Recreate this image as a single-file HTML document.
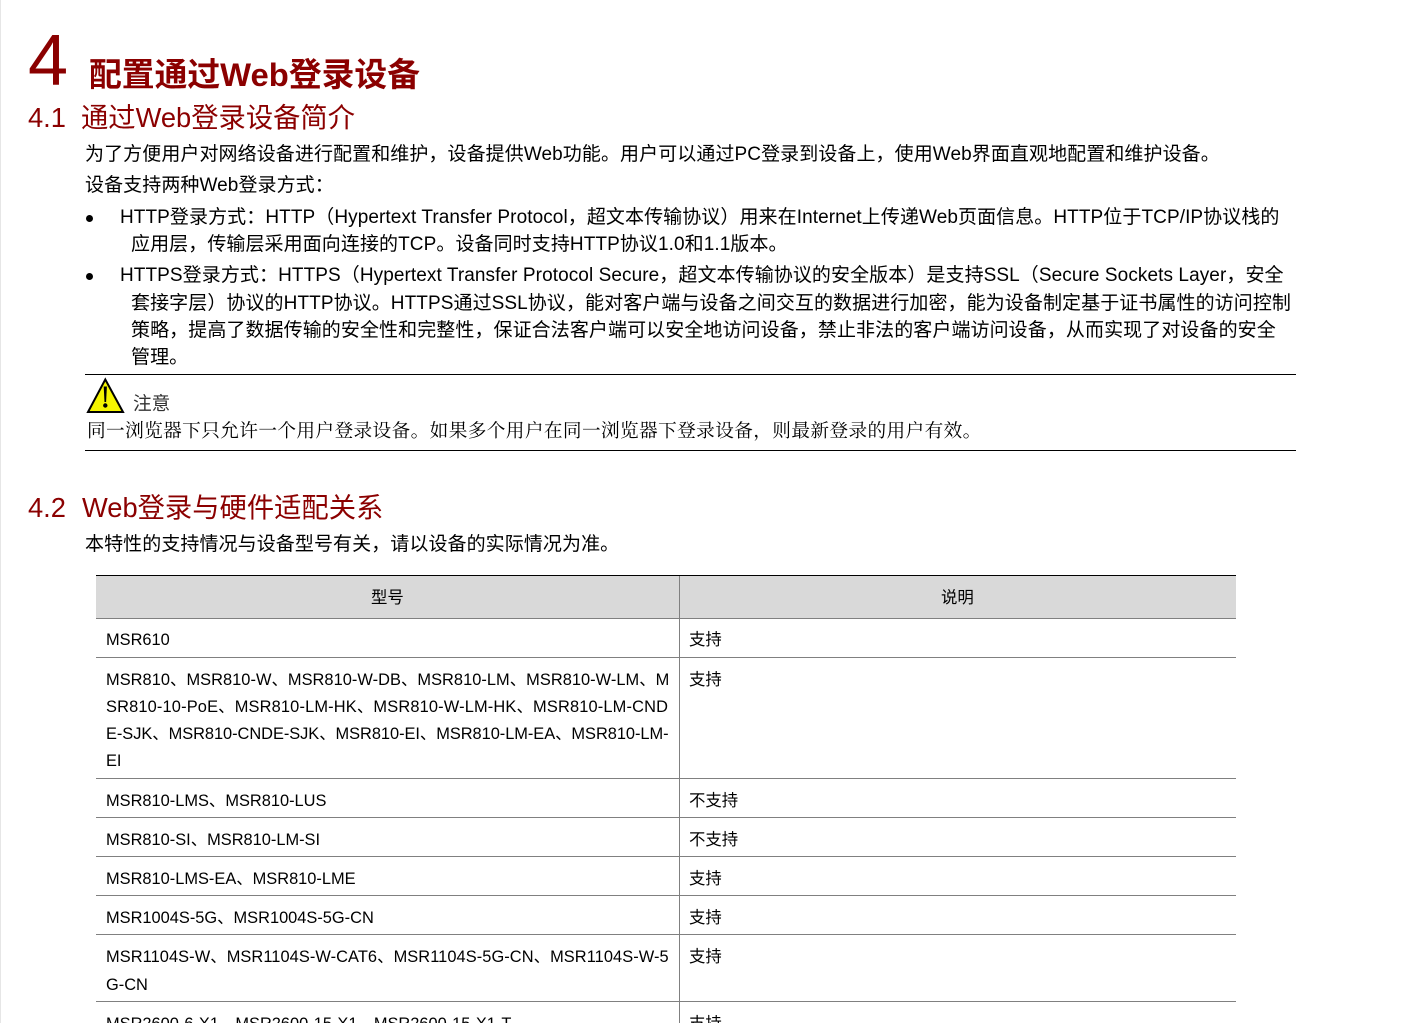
<!DOCTYPE html>
<html lang="zh-CN"><head><meta charset="utf-8"><title>配置通过Web登录设备</title>
<style>
html{margin:0;padding:0;background:#fff;overflow:hidden;width:1422px;height:1023px}
body{margin:0;padding:0;background:#fff;position:relative;width:1422px;height:1023px;overflow:hidden;font-family:"Liberation Sans","Noto Sans CJK SC",sans-serif;color:#000}
.t{position:absolute;white-space:nowrap;line-height:30px;height:30px}
.b{font-size:19px;letter-spacing:.08px}
.r{color:#8b0000}
.h2{font-size:27.3px;line-height:36px;height:36px}
.c{font-size:16.4px;color:#000}
.l{position:absolute;background:#000}
.g{position:absolute;background:#808080}
</style></head><body>
<div style="position:absolute;left:0;top:0;width:1px;height:1023px;background:#e6e6e6"></div>
<div class="t r" style="left:28px;top:21px;font-size:72px;line-height:80px;height:80px">4</div>
<div class="t r" style="left:89px;top:55px;font-size:32.8px;line-height:40px;height:40px;font-weight:bold">配置通过Web登录设备</div>
<div class="t r h2" style="left:28px;top:100px">4.1</div>
<div class="t r h2" style="left:81px;top:100px">通过Web登录设备简介</div>
<div class="t b" style="left:85px;top:140px">为了方便用户对网络设备进行配置和维护，设备提供Web功能。用户可以通过PC登录到设备上，使用Web界面直观地配置和维护设备。</div>
<div class="t b" style="left:85px;top:171px">设备支持两种Web登录方式：</div>
<div style="position:absolute;left:86px;top:215px;width:7px;height:7px;border-radius:50%;background:#000"></div>
<div class="t b" style="left:120px;top:203px">HTTP登录方式：HTTP（Hypertext Transfer Protocol，超文本传输协议）用来在Internet上传递Web页面信息。HTTP位于TCP/IP协议栈的</div>
<div class="t b" style="left:131px;top:230px">应用层，传输层采用面向连接的TCP。设备同时支持HTTP协议1.0和1.1版本。</div>
<div style="position:absolute;left:86px;top:273px;width:7px;height:7px;border-radius:50%;background:#000"></div>
<div class="t b" style="left:120px;top:261px">HTTPS登录方式：HTTPS（Hypertext Transfer Protocol Secure，超文本传输协议的安全版本）是支持SSL（Secure Sockets Layer，安全</div>
<div class="t b" style="left:131px;top:289px">套接字层）协议的HTTP协议。HTTPS通过SSL协议，能对客户端与设备之间交互的数据进行加密，能为设备制定基于证书属性的访问控制</div>
<div class="t b" style="left:131px;top:316px">策略，提高了数据传输的安全性和完整性，保证合法客户端可以安全地访问设备，禁止非法的客户端访问设备，从而实现了对设备的安全</div>
<div class="t b" style="left:131px;top:343px">管理。</div>
<div class="l" style="left:85px;top:374px;width:1211px;height:1px"></div>
<svg style="position:absolute;left:85px;top:377px" width="40" height="37" viewBox="0 0 40 37"><path d="M20.300 2.500 L38 35 H3 Z" fill="#f5f500" stroke="#000" stroke-width="2" stroke-linejoin="miter"/><path d="M18.700 9.500 h3.200 l-.8 15.500 h-1.600 Z" fill="#000"/><circle cx="20.300" cy="28.500" r="2.200" fill="#000"/></svg>
<div class="t" style="left:133px;top:389px;font-size:18.67px;color:#333">注意</div>
<div class="t" style="left:87px;top:417px;font-size:18.67px;letter-spacing:.38px;font-family:'Liberation Serif','Noto Serif CJK SC',serif;color:#000">同一浏览器下只允许一个用户登录设备。如果多个用户在同一浏览器下登录设备，则最新登录的用户有效。</div>
<div class="l" style="left:85px;top:450px;width:1211px;height:1px"></div>
<div class="t r h2" style="left:28px;top:490px">4.2</div>
<div class="t r h2" style="left:82px;top:490px">Web登录与硬件适配关系</div>
<div class="t b" style="left:85px;top:530px">本特性的支持情况与设备型号有关，请以设备的实际情况为准。</div>
<div style="position:absolute;left:96px;top:575px;width:1140px;height:43px;background:#d9d9d9"></div>
<div class="l" style="left:96px;top:575px;width:1140px;height:1px"></div>
<div class="g" style="left:96px;top:618px;width:1140px;height:1px"></div>
<div class="g" style="left:96px;top:657px;width:1140px;height:1px"></div>
<div class="g" style="left:96px;top:778px;width:1140px;height:1px"></div>
<div class="g" style="left:96px;top:817px;width:1140px;height:1px"></div>
<div class="g" style="left:96px;top:856px;width:1140px;height:1px"></div>
<div class="g" style="left:96px;top:895px;width:1140px;height:1px"></div>
<div class="g" style="left:96px;top:934px;width:1140px;height:1px"></div>
<div class="g" style="left:96px;top:1001px;width:1140px;height:1px"></div>
<div class="g" style="left:679px;top:576px;width:1px;height:447px"></div>
<div class="t c" style="left:371px;top:583px">型号</div>
<div class="t c" style="left:941px;top:583px">说明</div>
<div class="t c" style="left:106px;top:625px">MSR610</div>
<div class="t c" style="left:689px;top:625px">支持</div>
<div class="t c" style="left:106px;top:665px;letter-spacing:.04px">MSR810、MSR810-W、MSR810-W-DB、MSR810-LM、MSR810-W-LM、M</div>
<div class="t c" style="left:106px;top:692px;letter-spacing:.16px">SR810-10-PoE、MSR810-LM-HK、MSR810-W-LM-HK、MSR810-LM-CND</div>
<div class="t c" style="left:106px;top:719px;letter-spacing:-.04px">E-SJK、MSR810-CNDE-SJK、MSR810-EI、MSR810-LM-EA、MSR810-LM-</div>
<div class="t c" style="left:106px;top:746px">EI</div>
<div class="t c" style="left:689px;top:665px">支持</div>
<div class="t c" style="left:106px;top:786px">MSR810-LMS、MSR810-LUS</div>
<div class="t c" style="left:689px;top:786px">不支持</div>
<div class="t c" style="left:106px;top:825px">MSR810-SI、MSR810-LM-SI</div>
<div class="t c" style="left:689px;top:825px">不支持</div>
<div class="t c" style="left:106px;top:864px">MSR810-LMS-EA、MSR810-LME</div>
<div class="t c" style="left:689px;top:864px">支持</div>
<div class="t c" style="left:106px;top:903px">MSR1004S-5G、MSR1004S-5G-CN</div>
<div class="t c" style="left:689px;top:903px">支持</div>
<div class="t c" style="left:106px;top:942px;letter-spacing:.07px">MSR1104S-W、MSR1104S-W-CAT6、MSR1104S-5G-CN、MSR1104S-W-5</div>
<div class="t c" style="left:106px;top:970px">G-CN</div>
<div class="t c" style="left:689px;top:942px">支持</div>
<div class="t c" style="left:106px;top:1009px">MSR2600-6-X1、MSR2600-15-X1、MSR2600-15-X1-T</div>
<div class="t c" style="left:689px;top:1009px">支持</div>
</body></html>
